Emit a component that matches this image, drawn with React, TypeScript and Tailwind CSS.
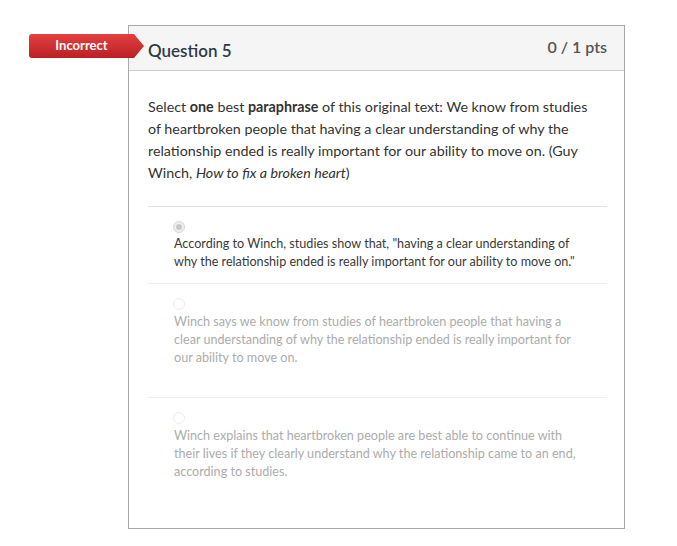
export default function App() {
  return (
    <div className="min-h-[546px] bg-white pt-[25px] pl-[128px] font-['Lato','Liberation_Sans',sans-serif]">
      <div className="relative w-[497px] border border-[#a9a9a9]">
        {/* Incorrect badge */}
        <div className="absolute left-[-100px] top-[8px] flex h-[24px]">
          <div className="flex w-[105px] items-center justify-center rounded-l-[3px] bg-gradient-to-b from-[#e4403f] to-[#bb1f23] text-[13px] font-bold text-white">
            Incorrect
          </div>
          <div className="h-[24px] w-[10px] bg-gradient-to-b from-[#e4403f] to-[#bb1f23] [clip-path:polygon(0_0,100%_50%,0_100%)]" />
        </div>

        <div className="flex h-[45px] items-start justify-between border-b border-[#c7cdd1] bg-[#f5f5f5] pl-[19px] pr-[17px]">
          <div className="pt-[12px] text-[17px] font-semibold text-[#2d3b45]">Question 5</div>
          <div className="pt-[9px] text-[16px] font-semibold text-[#555555]">0 / 1 pts</div>
        </div>

        <div className="pl-[19px] pr-[17px] pt-[25px]">
          <p className="pr-[8px] text-[14.3px] leading-[22px] text-[#333333]">
            Select <strong>one</strong> best <strong>paraphrase</strong> of this original text: We know from studies of heartbroken people that having a clear understanding of why the relationship ended is really important for our ability to move on. (Guy Winch, <em>How to fix a broken heart</em>)
          </p>

          <div className="mt-[22px]">
            <div className="border-t border-[#e3e3e3] pb-[12px] pl-[26px] pr-[18px] pt-[14px]">
              <div className="ml-[-1px] flex h-[12px] w-[12px] items-center justify-center rounded-full border border-[#d6d6d6] bg-[#f0f0f0]">
                <div className="h-[6px] w-[6px] rounded-full bg-[#c8c8c8]" />
              </div>
              <p className="mt-[2px] text-[12.6px] leading-[18px] text-[#3a3a3a]">
                According to Winch, studies show that, "having a clear understanding of why the relationship ended is really important for our ability to move on."
              </p>
            </div>
            <div className="border-t border-[#eeeeee] pb-[30px] pl-[26px] pr-[18px] pt-[14px]">
              <div className="ml-[-1px] h-[12px] w-[12px] rounded-full border border-[#ececec] bg-white" />
              <p className="mt-[3px] text-[12.6px] leading-[18px] text-[#acacac]">
                Winch says we know from studies of heartbroken people that having a clear understanding of why the relationship ended is really important for our ability to move on.
              </p>
            </div>
            <div className="border-t border-[#eeeeee] pb-[47px] pl-[26px] pr-[18px] pt-[14px]">
              <div className="ml-[-1px] h-[12px] w-[12px] rounded-full border border-[#ececec] bg-white" />
              <p className="mt-[3px] text-[12.6px] leading-[18px] text-[#acacac]">
                Winch explains that heartbroken people are best able to continue with their lives if they clearly understand why the relationship came to an end, according to studies.
              </p>
            </div>
          </div>
        </div>
      </div>
    </div>
  );
}
